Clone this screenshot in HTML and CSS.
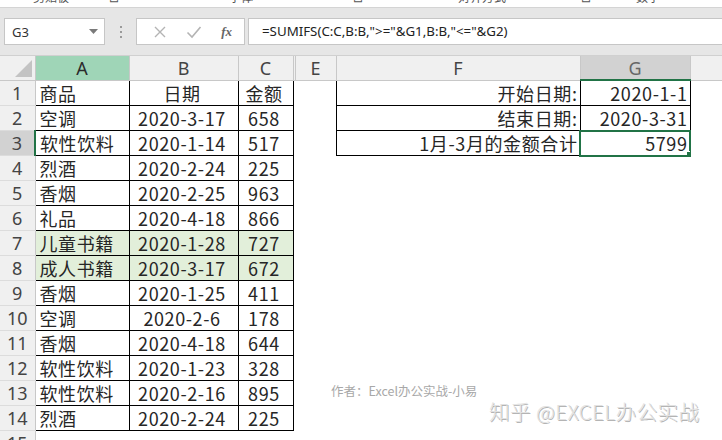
FILE: index.html
```html
<!DOCTYPE html>
<html lang="zh-CN">
  <head>
    <meta charset="UTF-8" />
    <meta name="viewport" content="width=device-width, initial-scale=1.0" />
    <title>SUMIFS 日期区间求和</title>
    <link rel="stylesheet" href="styles.css">
  </head>
  <body>
    <div class="ribbon">
      <span class="lbl l1">剪贴板</span>
      <span class="lbl l2">⊡</span>
      <span class="lbl l3">字体</span>
      <span class="lbl l4">⊡</span>
      <span class="lbl l5">对齐方式</span>
      <span class="lbl l6">⊡</span>
      <span class="lbl l7">数字</span>
    </div>

    <div class="formula-bar">
      <div class="namebox">
        <span>G3</span>
        <svg width="9" height="6" viewBox="0 0 9 6"><path d="M0 0h9L4.5 5z" fill="#7a7a7a"/></svg>
      </div>
      <div class="grip">
        <svg width="3" height="12" viewBox="0 0 3 12"><g fill="#9a9a9a"><rect x="1" y="0" width="2" height="2"/><rect x="1" y="5" width="2" height="2"/><rect x="1" y="10" width="2" height="2"/></g></svg>
      </div>
      <div class="fbtns">
        <svg width="14" height="14" viewBox="0 0 14 14"><path d="M2 2l10 10M12 2L2 12" stroke="#b4b4b4" stroke-width="1.4" fill="none"/></svg>
        <svg width="16" height="14" viewBox="0 0 16 14"><path d="M1.5 7.5l4.5 4.5L14.5 2" stroke="#b4b4b4" stroke-width="1.6" fill="none"/></svg>
        <span class="fx">fx</span>
      </div>
      <div class="finput">=SUMIFS(C:C,B:B,"&gt;="&amp;G1,B:B,"&lt;="&amp;G2)</div>
    </div>

    <table class="sheet">
      <colgroup>
        <col style="width:35px">
        <col style="width:94px">
        <col style="width:109px">
        <col style="width:55px">
        <col style="width:2px">
        <col style="width:41px">
        <col style="width:244px">
        <col style="width:110px">
        <col style="width:32px">
      </colgroup>
      <thead>
        <tr>
          <th class="corner"><span class="tri"></span></th>
          <th class="col-a">A</th>
          <th>B</th>
          <th>C</th>
          <th class="hid"></th>
          <th>E</th>
          <th>F</th>
          <th class="col-sel">G</th>
          <th></th>
        </tr>
      </thead>
      <tbody>
        <tr><th>1</th><td class="b">商品</td><td class="b c">日期</td><td class="b c">金额</td><td></td><td></td><td class="b r">开始日期:</td><td class="b r">2020-1-1</td><td></td></tr>
        <tr><th>2</th><td class="b">空调</td><td class="b c">2020-3-17</td><td class="b c">658</td><td></td><td></td><td class="b r">结束日期:</td><td class="b r">2020-3-31</td><td></td></tr>
        <tr><th class="row-sel">3</th><td class="b">软性饮料</td><td class="b c">2020-1-14</td><td class="b c">517</td><td></td><td></td><td class="b r">1月-3月的金额合计</td><td class="b r active">5799</td><td></td></tr>
        <tr><th>4</th><td class="b">烈酒</td><td class="b c">2020-2-24</td><td class="b c">225</td><td></td><td></td><td></td><td></td><td></td></tr>
        <tr><th>5</th><td class="b">香烟</td><td class="b c">2020-2-25</td><td class="b c">963</td><td></td><td></td><td></td><td></td><td></td></tr>
        <tr><th>6</th><td class="b">礼品</td><td class="b c">2020-4-18</td><td class="b c">866</td><td></td><td></td><td></td><td></td><td></td></tr>
        <tr class="hl"><th>7</th><td class="b">儿童书籍</td><td class="b c">2020-1-28</td><td class="b c">727</td><td></td><td></td><td></td><td></td><td></td></tr>
        <tr class="hl"><th>8</th><td class="b">成人书籍</td><td class="b c">2020-3-17</td><td class="b c">672</td><td></td><td></td><td></td><td></td><td></td></tr>
        <tr><th>9</th><td class="b">香烟</td><td class="b c">2020-1-25</td><td class="b c">411</td><td></td><td></td><td></td><td></td><td></td></tr>
        <tr><th>10</th><td class="b">空调</td><td class="b c">2020-2-6</td><td class="b c">178</td><td></td><td></td><td></td><td></td><td></td></tr>
        <tr><th>11</th><td class="b">香烟</td><td class="b c">2020-4-18</td><td class="b c">644</td><td></td><td></td><td></td><td></td><td></td></tr>
        <tr><th>12</th><td class="b">软性饮料</td><td class="b c">2020-1-23</td><td class="b c">328</td><td></td><td></td><td></td><td></td><td></td></tr>
        <tr><th>13</th><td class="b">软性饮料</td><td class="b c">2020-2-16</td><td class="b c">895</td><td></td><td></td><td></td><td></td><td></td></tr>
        <tr><th>14</th><td class="b">烈酒</td><td class="b c">2020-2-24</td><td class="b c">225</td><td></td><td></td><td></td><td></td><td></td></tr>
        <tr><th>15</th><td></td><td></td><td></td><td></td><td></td><td></td><td></td><td></td></tr>
      </tbody>
    </table>

    <div class="author">作者：Excel办公实战-小易</div>
    <div class="zhihu">知乎 @EXCEL办公实战</div>
  </body>
</html>
```

FILE: styles.css
```css
body {
  margin: 0;
  width: 722px;
  height: 440px;
  overflow: hidden;
  position: relative;
  background-color: #fff;
  font-family: "Noto Sans CJK SC", "Noto Sans", sans-serif;
  color: #222;
}

/* ribbon group labels, cut off at the top of the shot */
.ribbon {
  height: 7px;
  overflow: hidden;
  display: flex;
  border-bottom: 1px solid #d4d4d4;
  background-color: #fff;
}

.lbl {
  font-size: 12px;
  line-height: 14px;
  margin-top: -10px;
  color: #555;
  white-space: nowrap;
}

.l1 { margin-left: 33px; }
.l2 { margin-left: 40px; }
.l3 { margin-left: 110px; }
.l4 { margin-left: 100px; }
.l5 { margin-left: 95px; }
.l6 { margin-left: 75px; }
.l7 { margin-left: 45px; }

.formula-bar {
  display: flex;
  align-items: center;
  height: 48px;
  padding-left: 4px;
  background-color: #e6e6e6;
  border-bottom: 1px solid #d0d0d0;
  box-sizing: border-box;
}

.namebox {
  width: 101px;
  height: 27px;
  box-sizing: border-box;
  background-color: #fff;
  border: 1px solid #c6c6c6;
  display: flex;
  align-items: center;
  justify-content: space-between;
  padding: 0 6px 0 7px;
  font-family: "Noto Sans", sans-serif;
  font-size: 13px;
  color: #333;
}

.grip {
  width: 31px;
  display: flex;
  justify-content: center;
}

.fbtns {
  width: 109px;
  height: 27px;
  box-sizing: border-box;
  background-color: #fff;
  border: 1px solid #c6c6c6;
  display: flex;
  align-items: center;
  justify-content: space-between;
  padding: 0 12px 0 16px;
}

.fx {
  font-family: "Liberation Serif", serif;
  font-style: italic;
  font-weight: bold;
  font-size: 13px;
  color: #666;
}

.finput {
  flex: 1;
  height: 27px;
  box-sizing: border-box;
  margin-left: 3px;
  background-color: #fff;
  border: 1px solid #c6c6c6;
  border-right: none;
  padding-left: 13px;
  font-family: "Noto Sans", sans-serif;
  font-size: 13.3px;
  line-height: 25px;
  color: #222;
  white-space: nowrap;
}

/* worksheet */
.sheet {
  table-layout: fixed;
  border-collapse: collapse;
  width: 722px;
}

.sheet th,
.sheet td {
  height: 24px;
  padding: 0;
  overflow: hidden;
  white-space: nowrap;
}

.sheet thead th {
  height: 23px;
  background-color: #f0f0f0;
  border-right: 1px solid #c8c8c8;
  border-bottom: 1px solid #c8c8c8;
  font-family: "Noto Sans", sans-serif;
  font-weight: normal;
  font-size: 18px;
  line-height: 22px;
  color: #444;
}

.sheet thead th.col-a {
  background-color: #9fd5b7;
  color: #2b2b2b;
}

.sheet thead th.col-sel {
  background-color: #d2d2d2;
  border-bottom: 2px solid #217346;
  color: #666;
}

.sheet thead th.hid {
  border-left: 1px solid #c8c8c8;
}

.corner {
  position: relative;
}

.tri {
  position: absolute;
  right: 3px;
  bottom: 3px;
  width: 0;
  height: 0;
  border-left: 17px solid transparent;
  border-bottom: 17px solid #c3c3c3;
}

.sheet tbody th {
  background-color: #f0f0f0;
  border-right: 1px solid #c8c8c8;
  border-bottom: 1px solid #dcdcdc;
  font-family: "Noto Sans", sans-serif;
  font-weight: normal;
  font-size: 18px;
  line-height: 24px;
  color: #444;
  text-align: center;
  vertical-align: bottom;
}

.sheet tbody th.row-sel {
  background-color: #d2d2d2;
  border-right: 2px solid #217346;
}

.sheet td {
  font-size: 18px;
  line-height: 24px;
  letter-spacing: 0.6px;
  vertical-align: bottom;
  color: #262626;
}

.sheet td.b {
  border: 1px solid #000;
  padding-left: 4px;
  padding-right: 3px;
}

.sheet td.c {
  text-align: center;
  padding-left: 0;
}

.sheet td.r {
  text-align: right;
  padding-right: 2px;
}

.hl td.b {
  background-color: #e2efda;
}

.sheet td.active {
  position: relative;
  outline: 2px solid #217346;
  outline-offset: -1px;
}

.sheet td.active::after {
  content: "";
  position: absolute;
  right: -3px;
  bottom: -3px;
  width: 5px;
  height: 5px;
  background-color: #217346;
  border: 1px solid #fff;
}

/* watermark */
.author {
  position: absolute;
  left: 331px;
  top: 381px;
  font-size: 12.5px;
  color: #a8a8a8;
}

.zhihu {
  position: absolute;
  left: 489px;
  top: 396px;
  font-size: 20.5px;
  font-weight: 300;
  color: #e2e2e2;
  text-shadow: 1px 1px 0 #b4b4b4;
  letter-spacing: 0.5px;
}
```
